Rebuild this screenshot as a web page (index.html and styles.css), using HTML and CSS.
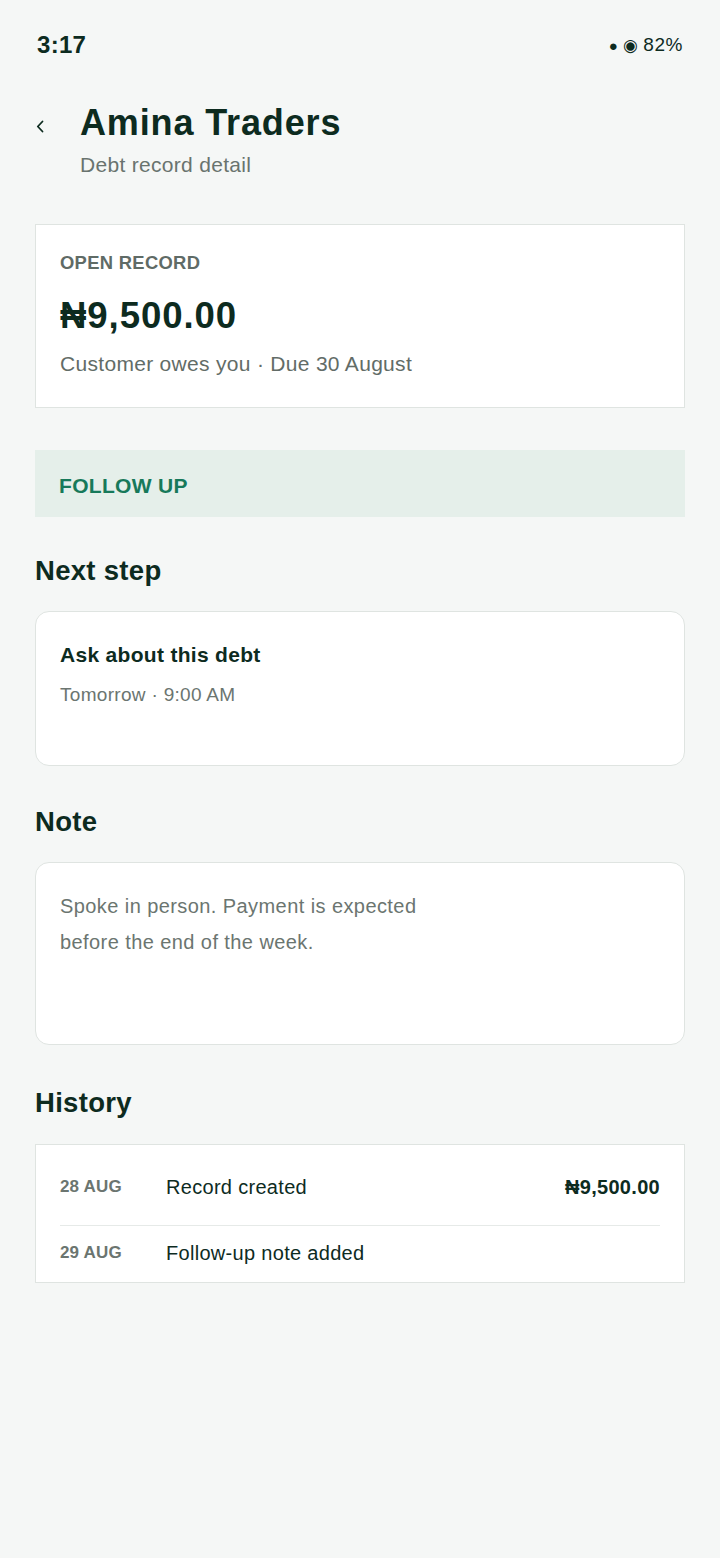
FILE: index.html
```html
<!DOCTYPE html>
<html lang="en">
<head>
<meta charset="utf-8">
<meta name="viewport" content="width=720">
<link rel="stylesheet" href="styles.css">
<title>Amina Traders</title>
</head>
<body>
<div class="screen">
  <div class="status">
    <span class="time">3:17</span>
    <span class="sys"><span class="dot">●</span><span class="ring">◉</span><span class="batt">82%</span></span>
  </div>

  <header class="head">
    <div class="back">
      <svg width="8" height="13" viewBox="0 0 8 13"><polyline points="6.5,1.5 1.8,6.5 6.5,11.5" fill="none" stroke="#0d2b1f" stroke-width="1.8" stroke-linecap="round" stroke-linejoin="round"/></svg>
    </div>
    <div class="head-text">
      <h1 class="title">Amina Traders</h1>
      <div class="subtitle">Debt record detail</div>
    </div>
  </header>

  <main class="content">
    <section class="card summary">
      <div class="eyebrow">OPEN RECORD</div>
      <div class="amount">₦9,500.00</div>
      <div class="meta">Customer owes you · Due 30 August</div>
    </section>

    <div class="band">FOLLOW UP</div>

    <h2 class="section-title first">Next step</h2>
    <section class="card rounded step">
      <div class="step-title">Ask about this debt</div>
      <div class="step-time">Tomorrow · 9:00 AM</div>
    </section>

    <h2 class="section-title">Note</h2>
    <section class="card rounded note">
      <p class="note-text">Spoke in person. Payment is expected<br>before the end of the week.</p>
    </section>

    <h2 class="section-title last">History</h2>
    <section class="card history">
      <div class="hist-row top">
        <span class="hist-date">28 AUG</span>
        <span class="hist-desc">Record created</span>
        <span class="hist-amt">₦9,500.00</span>
      </div>
      <div class="hist-row bottom">
        <span class="hist-date">29 AUG</span>
        <span class="hist-desc">Follow-up note added</span>
      </div>
    </section>
  </main>
</div>
</body>
</html>
```

FILE: styles.css
```css
* { box-sizing: border-box; }
html, body {
  margin: 0;
  padding: 0;
  background: #f5f7f6;
}
body {
  font-family: "Liberation Sans", Arial, sans-serif;
  color: #0d2b1f;
  width: 720px;
  min-height: 1558px;
  letter-spacing: 0.019em;
}
.screen {
  padding: 0 35px;
}
.status {
  display: flex;
  justify-content: space-between;
  align-items: center;
  height: 90px;
  padding: 0 2px 0 2px;
}
.time {
  font-size: 24px;
  font-weight: 700;
}
.sys {
  display: flex;
  align-items: center;
  gap: 5px;
  font-size: 18px;
  color: #0d2b1f;
}
.dot { font-size: 15px; }
.ring { font-family: "DejaVu Sans", sans-serif; font-size: 17px; }
.batt { font-size: 19px; letter-spacing: 0.03em; }

.head {
  display: flex;
  align-items: flex-start;
  padding-top: 11px;
}
.back {
  width: 45px;
  padding-top: 19px;
  padding-left: 1px;
}
.back svg { display: block; }
.title {
  margin: 0;
  font-size: 36px;
  line-height: 44px;
  font-weight: 700;
  letter-spacing: 0.024em;
  color: #0d2b1f;
}
.subtitle {
  margin-top: 8px;
  font-size: 21px;
  line-height: 24px;
  color: #69736e;
}

.content {
  padding-top: 47px;
}
.card {
  background: #ffffff;
  border: 1px solid #dfe4e1;
}
.rounded { border-radius: 14px; }

.summary {
  padding: 27px 24px 31px;
}
.eyebrow {
  font-size: 18.4px;
  line-height: 22px;
  font-weight: 700;
  color: #5f6b66;
}
.amount {
  margin-top: 20px;
  font-size: 36.6px;
  line-height: 44px;
  font-weight: 700;
  letter-spacing: 0.025em;
  color: #0d2b1f;
}
.meta {
  margin-top: 14px;
  font-size: 21px;
  line-height: 24px;
  color: #626c67;
}

.band {
  margin-top: 42px;
  background: #e5efea;
  padding: 24px 24px 20px;
  font-size: 21px;
  line-height: 23px;
  font-weight: 700;
  color: #17795a;
}

.section-title {
  margin: 40px 0 24px;
  font-size: 27.5px;
  line-height: 32px;
  font-weight: 700;
  color: #0d2b1f;
}
.section-title.first { margin-top: 38px; }
.section-title.last { margin-top: 42px; margin-bottom: 25px; }

.step {
  padding: 31px 24px 0;
  min-height: 155px;
}
.step-title {
  font-size: 21px;
  line-height: 24px;
  font-weight: 700;
}
.step-time {
  margin-top: 17px;
  font-size: 19px;
  line-height: 22px;
  color: #6b7570;
}

.note {
  padding: 25px 24px 0;
  min-height: 183px;
}
.note-text {
  margin: 0;
  font-size: 20px;
  line-height: 36px;
  letter-spacing: 0.021em;
  color: #6b7570;
}

.history {
  padding: 30px 24px 17px;
}
.hist-row {
  display: flex;
  align-items: center;
  font-size: 20px;
  line-height: 24px;
}
.hist-row.top {
  padding-bottom: 26px;
  border-bottom: 1px solid #e6eae8;
}
.hist-row.bottom {
  padding-top: 15px;
}
.hist-date {
  width: 106px;
  flex: none;
  font-size: 17px;
  font-weight: 700;
  letter-spacing: 0.01em;
  color: #6b7570;
}
.hist-desc {
  flex: 1;
  color: #0d2b1f;
}
.hist-amt {
  font-weight: 700;
  color: #0d2b1f;
}
```
